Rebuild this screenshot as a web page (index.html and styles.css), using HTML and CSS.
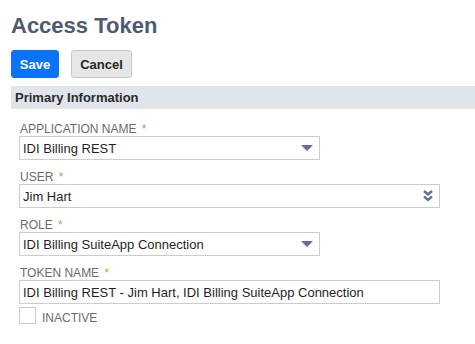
FILE: index.html
```html
<!DOCTYPE html>
<html>
<head>
<meta charset="utf-8">
<link rel="stylesheet" href="styles.css">
</head>
<body>
<div class="page">
  <h1 class="title">Access Token</h1>
  <div class="actions">
    <button class="btn btn-primary">Save</button>
    <button class="btn btn-secondary">Cancel</button>
  </div>
  <div class="section-head">Primary Information</div>
  <div class="fields">
    <div class="field">
      <div class="label">APPLICATION NAME <span class="req">*</span></div>
      <div class="input select narrow">
        <span>IDI Billing REST</span>
        <svg class="caret" width="12" height="6" viewBox="0 0 12 6"><path d="M0 0H12L6 6Z" fill="#5d7192"/></svg>
      </div>
    </div>
    <div class="field">
      <div class="label">USER <span class="req">*</span></div>
      <div class="input select wide">
        <span>Jim Hart</span>
        <svg class="chev" width="10" height="12" viewBox="0 0 10 12"><path d="M1 1L5 4.5L9 1M1 6.5L5 10L9 6.5" fill="none" stroke="#5d7192" stroke-width="2.4"/></svg>
      </div>
    </div>
    <div class="field">
      <div class="label">ROLE <span class="req">*</span></div>
      <div class="input select narrow">
        <span>IDI Billing SuiteApp Connection</span>
        <svg class="caret" width="12" height="6" viewBox="0 0 12 6"><path d="M0 0H12L6 6Z" fill="#5d7192"/></svg>
      </div>
    </div>
    <div class="field">
      <div class="label">TOKEN NAME <span class="req">*</span></div>
      <div class="input wide">
        <span>IDI Billing REST - Jim Hart, IDI Billing SuiteApp Connection</span>
      </div>
    </div>
    <div class="check-row">
      <span class="checkbox"></span>
      <span class="check-label">INACTIVE</span>
    </div>
  </div>
</div>
</body>
</html>
```

FILE: styles.css
```css
* { box-sizing: border-box; }
body {
  margin: 0;
  background: #fff;
  font-family: "Liberation Sans", Arial, sans-serif;
}
.page {
  padding: 0 0 0 11px;
}
.title {
  margin: 0;
  padding-top: 12px;
  height: 50px;
  font-size: 22px;
  line-height: 28px;
  font-weight: bold;
  color: #4d5b70;
}
.actions {
  display: flex;
  gap: 12px;
  height: 28px;
}
.btn {
  font-family: "Liberation Sans", Arial, sans-serif;
  font-size: 13px;
  font-weight: bold;
  height: 28px;
  border-radius: 3px;
  padding: 0;
  margin: 0;
}
.btn-primary {
  width: 48px;
  background: #0b72fc;
  color: #fff;
  border: 1px solid #0b72fc;
}
.btn-secondary {
  width: 61px;
  background: #e6e6e6;
  color: #262626;
  border: 1px solid #c8c8c8;
}
.section-head {
  margin-top: 8px;
  height: 23px;
  line-height: 23px;
  background: #e0e4eb;
  padding-left: 4px;
  font-size: 13px;
  font-weight: bold;
  color: #2b2b2b;
}
.fields {
  padding: 13px 0 0 8px;
  display: flex;
  flex-direction: column;
}
.field {
  display: flex;
  flex-direction: column;
  margin-bottom: 10px;
}
.label {
  height: 14px;
  line-height: 14px;
  font-size: 12px;
  color: #6b6b6b;
  padding-left: 1px;
}
.req {
  color: #cc9a2a;
  margin-left: 2px;
  font-size: 12px;
}
.input {
  height: 24px;
  border: 1px solid #cccccc;
  display: flex;
  align-items: center;
  justify-content: space-between;
  padding: 0 6px 0 3px;
  font-size: 13px;
  color: #1f1f1f;
  background: #fff;
}
.narrow { width: 301px; }
.wide { width: 421px; }
.check-row {
  margin-top: -7px;
  display: flex;
  align-items: flex-end;
  gap: 6px;
}
.checkbox {
  width: 17px;
  height: 17px;
  border: 1px solid #cccccc;
  background: #fff;
}
.check-label {
  font-size: 12px;
  color: #6b6b6b;
  line-height: 12px;
}
```
